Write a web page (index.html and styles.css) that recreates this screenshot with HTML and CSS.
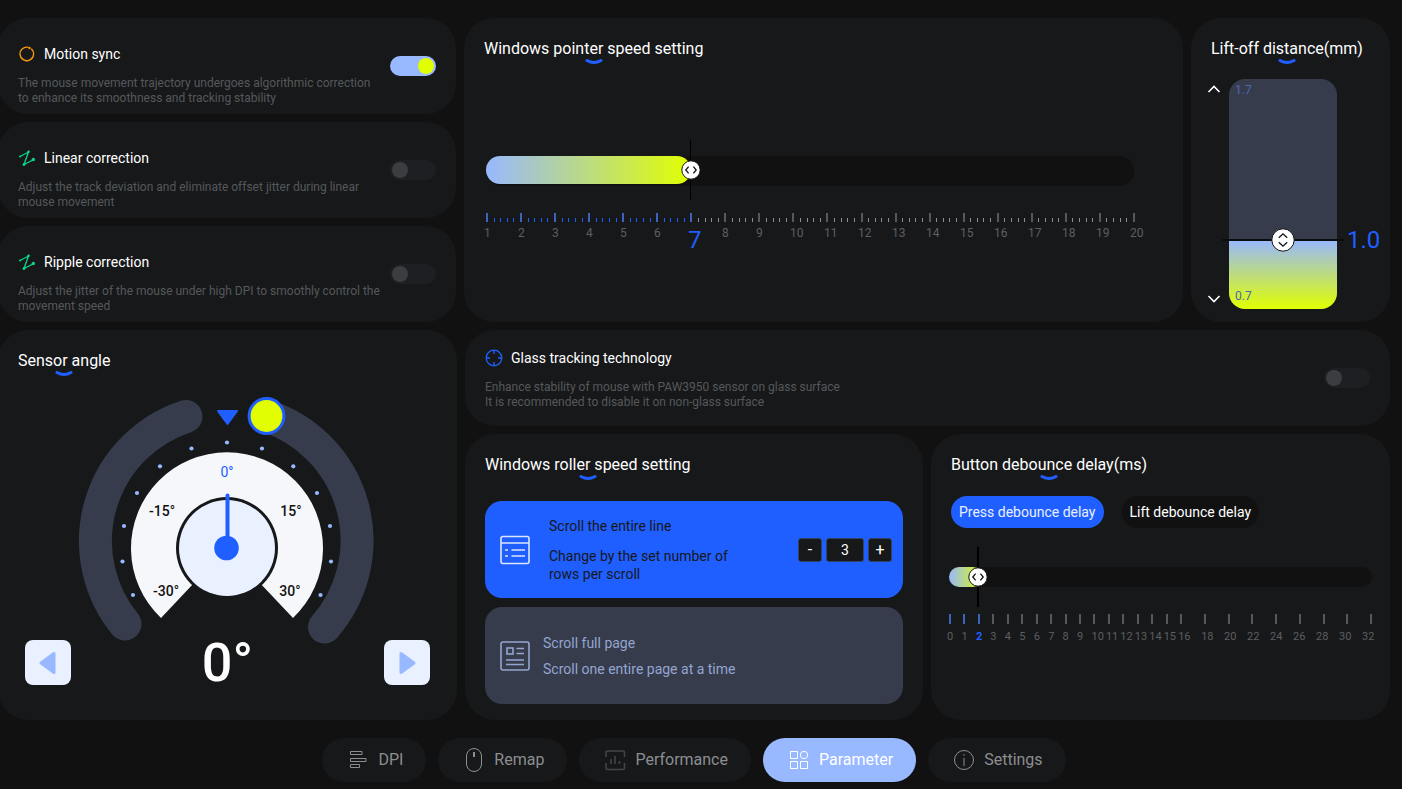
FILE: index.html
```html
<!DOCTYPE html>
<html lang="en">
<head>
  <meta charset="UTF-8">
  <meta name="viewport" content="width=device-width, initial-scale=1.0">
  <title>Parameter</title>
  <link rel="stylesheet" href="styles.css">
</head>
<body>
  <div class="page">
    <main class="panels">
      <div class="row row-top">
        <div class="stack">
          <section class="card switch-card">
            <div class="switch-text">
              <h3 class="switch-title">
                <svg class="switch-icon orange" viewBox="0 0 18 18"><path d="M10.500 2.300A6.800 6.800 0 1 0 13.200 3.700"/><circle cx="11.500" cy="3" r="1.200"/></svg>
                <label for="motionSync">Motion sync</label>
              </h3>
              <p class="switch-desc">The mouse movement trajectory undergoes algorithmic correction<br>to enhance its smoothness and tracking stability</p>
            </div>
            <input type="checkbox" class="toggle" id="motionSync" checked>
          </section>
          <section class="card switch-card">
            <div class="switch-text">
              <h3 class="switch-title">
                <svg class="switch-icon green" viewBox="0 0 18 18"><path d="M2 7.5L10.5 3L6 15.5L15 11"/><circle cx="10.5" cy="2.8" r="1.200"/><circle cx="6" cy="15.5" r="1.400"/><circle cx="15.3" cy="10.5" r="1.700"/><circle cx="2" cy="7.5" r="1"/></svg>
                <label for="linearCorrection">Linear correction</label>
              </h3>
              <p class="switch-desc">Adjust the track deviation and eliminate offset jitter during linear<br>mouse movement</p>
            </div>
            <input type="checkbox" class="toggle" id="linearCorrection">
          </section>
          <section class="card switch-card">
            <div class="switch-text">
              <h3 class="switch-title">
                <svg class="switch-icon green" viewBox="0 0 18 18"><path d="M2 7.5L10.5 3L6 15.5L15 11"/><circle cx="10.5" cy="2.8" r="1.200"/><circle cx="6" cy="15.5" r="1.400"/><circle cx="15.3" cy="10.5" r="1.700"/><circle cx="2" cy="7.5" r="1"/></svg>
                <label for="rippleCorrection">Ripple correction</label>
              </h3>
              <p class="switch-desc">Adjust the jitter of the mouse under high DPI to smoothly control the<br>movement speed</p>
            </div>
            <input type="checkbox" class="toggle" id="rippleCorrection">
          </section>
        </div>

        <section class="card pointer-card">
          <h2 class="card-title">Windows pointer speed setting
            <svg class="smile" viewBox="0 0 18 6"><path d="M2 1.5Q9 5.5 16 1.5"/></svg>
          </h2>
          <div class="slider pointer-slider">
            <div class="slider-track"><div class="slider-fill" style="width: 31.6%"></div></div>
            <div class="slider-handle" style="left: 31.6%">
              <svg viewBox="0 0 20 20"><circle cx="10" cy="10" r="9.2"/><path d="M7.6 6.6L4.8 10L7.6 13.4M12.4 6.6L15.2 10L12.4 13.4"/></svg>
            </div>
            <input type="range" class="slider-input" min="1" max="20" value="7" aria-label="Windows pointer speed setting">
          </div>
          <div class="ruler" id="pointerRuler"></div>
          <div class="scale pointer-scale" id="pointerScale"></div>
        </section>

        <section class="card lift-card">
          <h2 class="card-title">Lift-off distance(mm)
            <svg class="smile" viewBox="0 0 18 6"><path d="M2 1.5Q9 5.5 16 1.5"/></svg>
          </h2>
          <div class="lift">
            <div class="lift-arrows">
              <button class="arrow-button" aria-label="Increase"><svg viewBox="0 0 14 8"><path d="M1.5 7L7 1.5L12.5 7"/></svg></button>
              <button class="arrow-button" aria-label="Decrease"><svg viewBox="0 0 14 8"><path d="M1.5 1L7 6.5L12.5 1"/></svg></button>
            </div>
            <div class="lift-bar">
              <span class="lift-limit">1.7</span>
              <div class="lift-fill" style="height: 30%"></div>
              <div class="lift-line" style="bottom: 30%">
                <svg viewBox="0 0 24 24"><circle cx="12" cy="12" r="11.2"/><path d="M7.8 9.8L12 5.8L16.2 9.8M7.8 14.2L12 18.2L16.2 14.2"/></svg>
              </div>
              <span class="lift-limit">0.7</span>
              <input type="range" class="slider-input" min="0.7" max="1.7" step="0.1" value="1.0" aria-label="Lift-off distance">
            </div>
            <output class="lift-value">1.0</output>
          </div>
        </section>
      </div>

      <div class="row row-bottom">
        <section class="card sensor-card">
          <h2 class="card-title">Sensor angle
            <svg class="smile" viewBox="0 0 18 6"><path d="M2 1.5Q9 5.5 16 1.5"/></svg>
          </h2>
          <svg class="dial" viewBox="77 395 302 245">
            <path class="dial-ring" d="M186 416.500A131 131 0 0 0 125 624M266.500 416A131 131 0 0 1 324.500 627"/>
            <path class="dial-face" d="M227 548L161 618A96 96 0 1 1 293 618Z"/>
            <circle class="dial-gap" cx="227" cy="548" r="51"/>
            <circle class="dial-disc" cx="227" cy="548" r="48"/>
            <path class="dial-needle" d="M227.500 495.500V548"/>
            <circle class="dial-hub" cx="226.500" cy="548" r="12.300"/>
            <path class="dial-pointer" d="M218 411H237L227.500 424Z"/>
            <g class="dial-dots">
              <circle cx="227" cy="442.500" r="2.100"/>
              <circle cx="191.500" cy="448.500" r="2.100"/><circle cx="262" cy="448.500" r="2.100"/>
              <circle cx="160" cy="466.300" r="2.100"/><circle cx="293.300" cy="466.300" r="2.100"/>
              <circle cx="137" cy="493" r="2.100"/><circle cx="317" cy="493" r="2.100"/>
              <circle cx="124" cy="526" r="2.100"/><circle cx="330" cy="526" r="2.100"/>
              <circle cx="122.500" cy="561.500" r="2.100"/><circle cx="331" cy="561.500" r="2.100"/>
              <circle cx="133" cy="595" r="2.100"/><circle cx="320.500" cy="595" r="2.100"/>
            </g>
            <circle class="dial-knob" cx="266.500" cy="416" r="17.400"/>
            <g class="dial-labels">
              <text class="current" x="227" y="477">0°</text>
              <text x="162" y="516">-15°</text>
              <text x="291" y="516">15°</text>
              <text x="166" y="596">-30°</text>
              <text x="290" y="596">30°</text>
            </g>
          </svg>
          <div class="angle-row">
            <button class="angle-button" aria-label="Decrease angle"><svg viewBox="0 0 20 24"><path d="M16 2.500V21.500L3 12Z"/></svg></button>
            <output class="angle-value">0°</output>
            <button class="angle-button" aria-label="Increase angle"><svg viewBox="0 0 20 24"><path d="M4 2.500V21.500L17 12Z"/></svg></button>
          </div>
        </section>

        <div class="stack">
          <section class="card switch-card glass-card">
            <div class="switch-text">
              <h3 class="switch-title">
                <svg class="switch-icon blue" viewBox="0 0 18 18"><circle class="outline" cx="9" cy="9" r="7.800"/><path d="M9 1V5M9 13V17M1 9H5M13 9H17"/></svg>
                <label for="glassTracking">Glass tracking technology</label>
              </h3>
              <p class="switch-desc">Enhance stability of mouse with PAW3950 sensor on glass surface<br>It is recommended to disable it on non-glass surface</p>
            </div>
            <input type="checkbox" class="toggle" id="glassTracking">
          </section>

          <div class="pair">
            <section class="card roller-card">
              <h2 class="card-title">Windows roller speed setting
                <svg class="smile" viewBox="0 0 18 6"><path d="M2 1.5Q9 5.5 16 1.5"/></svg>
              </h2>
              <div class="roller-options">
                <div class="roller-option selected">
                  <input type="radio" name="roller" id="rollerLine" class="roller-radio" checked>
                  <label class="roller-label" for="rollerLine">
                    <svg class="roller-icon" viewBox="0 0 30 30"><rect x="1" y="1.500" width="28" height="27" rx="2"/><path d="M1 8H29M5 15H8M11.500 15H25M5 21H8M11.500 21H25"/></svg>
                    <span class="roller-text"><span>Scroll the entire line</span><span>Change by the set number of rows per scroll</span></span>
                  </label>
                  <div class="stepper">
                    <button class="stepper-button" aria-label="Fewer rows">-</button>
                    <input type="text" class="stepper-value" value="3" aria-label="Rows per scroll">
                    <button class="stepper-button" aria-label="More rows">+</button>
                  </div>
                </div>
                <div class="roller-option">
                  <input type="radio" name="roller" id="rollerPage" class="roller-radio">
                  <label class="roller-label" for="rollerPage">
                    <svg class="roller-icon" viewBox="0 0 30 30"><rect x="1" y="1" width="28" height="28" rx="2"/><rect x="7" y="7" width="6" height="6"/><path d="M16.500 7.500H24M16.500 12.500H24M6 19H24M6 23.500H24"/></svg>
                    <span class="roller-text"><span>Scroll full page</span><span>Scroll one entire page at a time</span></span>
                  </label>
                </div>
              </div>
            </section>

            <section class="card debounce-card">
              <h2 class="card-title">Button debounce delay(ms)
                <svg class="smile" viewBox="0 0 18 6"><path d="M2 1.5Q9 5.5 16 1.5"/></svg>
              </h2>
              <div class="tabs">
                <button class="tab active">Press debounce delay</button>
                <button class="tab">Lift debounce delay</button>
              </div>
              <div class="slider debounce-slider">
                <div class="slider-track"><div class="slider-fill" style="width: 8%"></div></div>
                <div class="slider-handle" style="left: 6.9%">
                  <svg viewBox="0 0 20 20"><circle cx="10" cy="10" r="9.2"/><path d="M7.6 6.6L4.8 10L7.6 13.4M12.4 6.6L15.2 10L12.4 13.4"/></svg>
                </div>
                <input type="range" class="slider-input" min="0" max="32" value="2" aria-label="Button debounce delay">
              </div>
              <div class="debounce-ruler" id="debounceRuler"></div>
              <div class="scale debounce-scale" id="debounceScale"></div>
            </section>
          </div>
        </div>
      </div>
    </main>

    <nav class="nav">
      <a class="nav-item" href="#dpi">
        <svg class="nav-icon" viewBox="0 0 24 24"><path d="M4.500 3.500H16V6.500H4.500ZM4.500 10.500H20V13.500H4.500ZM4.500 16.500H13.500V19.500H4.500Z"/></svg>
        <span class="nav-label">DPI</span></a>
      <a class="nav-item" href="#remap">
        <svg class="nav-icon" viewBox="0 0 24 24"><rect x="4.500" y="0.500" width="15" height="23" rx="7.500"/><rect x="11.500" y="4.500" width="1" height="4"/></svg>
        <span class="nav-label">Remap</span></a>
      <a class="nav-item" href="#performance">
        <svg class="nav-icon dim" viewBox="0 0 24 24"><path d="M3 9V4.500Q3 3 4.500 3H20Q21.500 3 21.500 4.500V9M3 15V20Q3 21.500 4.500 21.500H20Q21.500 21.500 21.500 20V15M8 16V11M12 16V8M16.500 16V13"/></svg>
        <span class="nav-label">Performance</span></a>
      <a class="nav-item active" href="#parameter">
        <svg class="nav-icon" viewBox="0 0 24 24"><path d="M3.500 3.500H10.500V10.500H3.500ZM3.500 13.500H10.500V20.500H3.500ZM13.500 13.500H20.500V20.500H13.500Z"/><circle cx="17" cy="7" r="3.700"/></svg>
        <span class="nav-label">Parameter</span></a>
      <a class="nav-item" href="#settings">
        <svg class="nav-icon" viewBox="0 0 24 24"><circle cx="12" cy="12" r="9.500"/><path d="M12 10V18M12 6V7.500"/></svg>
        <span class="nav-label">Settings</span></a>
    </nav>
  </div>
  <script src="script.js"></script>
</body>
</html>
```

FILE: styles.css
```css
* {
  box-sizing: border-box;
}

body {
  margin: 0;
  background-color: #111111;
  color: #ffffff;
  font-family: Roboto, "Liberation Sans", sans-serif;
  font-size: 14px;
  overflow-x: hidden;
}

h2, h3, p {
  margin: 0;
  font-weight: 400;
}

button, input {
  margin: 0;
  font-family: inherit;
}

button {
  padding: 0;
  border: none;
  cursor: pointer;
}

svg {
  display: block;
  fill: none;
}

/* the left cards run slightly past the window edge */
.page {
  padding: 18px 12px 0 0;
  margin-left: -2px;
}

.panels {
  display: flex;
  flex-direction: column;
  gap: 8px;
}

.row {
  display: grid;
  gap: 8px;
}

.row-top {
  grid-template-columns: minmax(0, 458fr) minmax(0, 719fr) minmax(0, 199fr);
}

.row-bottom {
  grid-template-columns: minmax(0, 459fr) minmax(0, 925fr);
}

.stack {
  display: flex;
  flex-direction: column;
  gap: 8px;
}

.card {
  background-color: #17181a;
  border-radius: 30px;
}

.card-title {
  display: flex;
  flex-direction: column;
  align-items: center;
  width: max-content;
  padding-top: 21px;
  margin-left: 20px;
  font-size: 16px;
  line-height: 20px;
}

.smile {
  width: 18px;
  height: 6px;
  stroke: #205fff;
  stroke-width: 3;
  stroke-linecap: round;
}

/* Switch cards */
.switch-card {
  display: flex;
  align-items: center;
  justify-content: space-between;
  padding: 0 20px;
}

.switch-text {
  padding: 26px 0 8px;
}

.glass-card .switch-text {
  padding: 18px 0 16px;
}

.switch-title {
  display: flex;
  align-items: center;
  gap: 8px;
  margin-bottom: 12px;
  font-size: 14px;
  line-height: 20px;
}

.switch-icon {
  width: 18px;
  height: 18px;
}

.switch-icon circle {
  fill: currentColor;
}

.switch-icon path, .switch-icon .outline {
  stroke: currentColor;
  stroke-width: 1.3;
  fill: none;
}

.orange {
  color: #f59a0c;
}

.green {
  color: #08d68c;
}

.blue {
  color: #205fff;
}

.switch-desc {
  font-size: 12px;
  line-height: 15px;
  color: #55585a;
  white-space: nowrap;
}

.toggle {
  appearance: none;
  flex: none;
  width: 46px;
  height: 20px;
  padding: 2px;
  border-radius: 10px;
  background-color: #1e1f23;
  cursor: pointer;
}

.toggle::before {
  content: "";
  display: block;
  width: 16px;
  height: 16px;
  border-radius: 50%;
  background-color: #3c3d40;
}

.toggle:checked {
  background-color: #98b8ff;
}

.toggle:checked::before {
  margin-left: auto;
  background-color: #e1ff00;
}

/* Sliders */
.slider {
  position: relative;
  height: 60px;
  padding-top: 16px;
}

.slider-track {
  height: 30px;
  border-radius: 15px;
  background-color: #111111;
}

.slider-fill {
  height: 28px;
  border-radius: 14px;
  background: linear-gradient(90deg, #98b8ff, #e1ff00);
}

.slider-handle {
  position: absolute;
  top: 0;
  width: 20px;
  height: 60px;
  margin-left: -10px;
  padding-top: 20px;
  background: linear-gradient(#000000, #000000) center / 1px 100% no-repeat;
}

.slider-handle svg {
  width: 20px;
  height: 20px;
}

.slider-handle circle, .lift-line circle {
  fill: #ffffff;
  stroke: #111111;
}

.slider-handle path, .lift-line path {
  stroke: #111111;
  stroke-width: 1.3;
}

.slider-input {
  position: absolute;
  top: 0;
  left: 0;
  width: 100%;
  height: 100%;
  opacity: 0;
  cursor: pointer;
}

.scale {
  display: grid;
  font-size: 12px;
  line-height: 16px;
  color: #5c5f61;
}

.scale span {
  width: 0;
}

.pointer-slider {
  margin: 75px 49px 0 22px;
}

.ruler {
  display: flex;
  justify-content: space-between;
  align-items: flex-end;
  height: 9px;
  margin: 13px 48px 0 22px;
}

.ruler i {
  width: 1px;
  height: 4px;
  background-color: #8c8e90;
}

.ruler .major {
  width: 2px;
  height: 9px;
  background-color: #55585c;
}

.ruler .passed {
  background-color: #205fff;
}

.ruler .major.passed {
  background-color: #3f62bd;
}

.pointer-scale {
  grid-template-columns: repeat(20, minmax(0, 1fr));
  height: 30px;
  margin: 3px 19px 0 20px;
}

.pointer-scale .current {
  font-size: 24px;
  line-height: 30px;
  color: #205fff;
}

/* Lift-off distance */
.lift {
  display: flex;
  padding: 14px 0 13px 16px;
}

.lift-arrows {
  display: flex;
  flex-direction: column;
  justify-content: space-between;
  padding: 6px 0;
}

.arrow-button {
  background: none;
}

.arrow-button svg {
  width: 14px;
  height: 8px;
  stroke: #ffffff;
  stroke-width: 1.6;
}

.lift-bar {
  position: relative;
  display: flex;
  flex: none;
  flex-direction: column;
  justify-content: space-between;
  width: 108px;
  height: 230px;
  padding: 3px 6px 5px;
  margin-left: 8px;
  border-radius: 16px;
  background-color: #363c4c;
}

.lift-limit {
  position: relative;
  font-size: 12px;
  line-height: 16px;
  color: #4a69b5;
}

.lift-fill {
  position: absolute;
  left: 0;
  right: 0;
  bottom: 0;
  border-radius: 0 0 16px 16px;
  background: linear-gradient(#98b8ff, #e1ff00);
}

.lift-line {
  position: absolute;
  left: -7px;
  right: -7px;
  display: flex;
  align-items: center;
  justify-content: center;
  height: 2px;
  margin-bottom: -1px;
  background-color: #0b0c0e;
}

.lift-line svg {
  flex: none;
  width: 24px;
  height: 24px;
}

.lift-value {
  align-self: flex-end;
  margin: 0 0 54px 10px;
  font-size: 24px;
  line-height: 30px;
  color: #205fff;
}

/* Sensor angle */
.dial {
  width: 302px;
  height: 245px;
  margin: 18px auto 0;
  overflow: visible;
}

.dial-ring {
  stroke: #363c4c;
  stroke-width: 33;
  stroke-linecap: round;
}

.dial-face {
  fill: #f5f7fa;
}

.dial-gap {
  fill: #17181a;
}

.dial-disc {
  fill: #e9f0ff;
}

.dial-needle {
  stroke: #205fff;
  stroke-width: 4;
  stroke-linecap: round;
}

.dial-hub {
  fill: #205fff;
}

.dial-pointer {
  fill: #205fff;
  stroke: #205fff;
  stroke-width: 2;
  stroke-linejoin: round;
}

.dial-dots {
  fill: #98b8ff;
}

.dial-knob {
  fill: #e1ff00;
  stroke: #205fff;
  stroke-width: 3;
}

.dial-labels {
  fill: #111111;
  font-size: 14px;
  font-weight: 500;
  text-anchor: middle;
}

.dial-labels .current {
  fill: #205fff;
  font-weight: 400;
}

.angle-row {
  display: flex;
  align-items: center;
  justify-content: space-between;
  padding: 0 27px;
}

.angle-button {
  display: flex;
  align-items: center;
  justify-content: center;
  width: 46px;
  height: 45px;
  border-radius: 8px;
  background-color: #e9f0ff;
}

.angle-button svg {
  width: 20px;
  height: 24px;
  fill: #98b8ff;
  stroke: #98b8ff;
  stroke-width: 3;
  stroke-linejoin: round;
}

.angle-value {
  font-size: 54px;
  font-weight: 500;
  line-height: 45px;
}

/* Roller speed */
.pair {
  display: grid;
  grid-template-columns: minmax(0, 458fr) minmax(0, 459fr);
  gap: 8px;
}

.roller-card {
  padding-bottom: 16px;
}

.roller-options {
  display: flex;
  flex-direction: column;
  gap: 9px;
  margin: 20px 20px 0;
}

.roller-option {
  display: flex;
  align-items: center;
  justify-content: space-between;
  height: 97px;
  padding: 0 11px 0 15px;
  border-radius: 17px;
  background-color: #363c4c;
  color: #94a5d0;
}

.roller-option.selected {
  background-color: #205fff;
  color: #17181a;
}

.roller-radio {
  position: absolute;
  opacity: 0;
}

.roller-label {
  display: flex;
  align-items: center;
  gap: 13px;
  cursor: pointer;
}

.selected .roller-label {
  gap: 19px;
}

.roller-icon {
  flex: none;
  width: 30px;
  height: 30px;
  stroke: #94a5d0;
  stroke-width: 1.6;
}

.selected .roller-icon {
  stroke: #dbe5ff;
}

.roller-text {
  display: flex;
  flex-direction: column;
  gap: 8px;
  max-width: 200px;
  line-height: 18px;
}

.selected .roller-text {
  gap: 12px;
}

.stepper {
  display: flex;
  gap: 4px;
}

.stepper-button, .stepper-value {
  width: 24px;
  height: 24px;
  padding: 0;
  border: 1px solid #34435e;
  border-radius: 3px;
  background-color: #17181a;
  color: #ffffff;
  font-size: 16px;
  line-height: 20px;
  text-align: center;
}

.stepper-value {
  width: 38px;
  font-size: 14px;
}

/* Debounce */
.tabs {
  display: flex;
  gap: 18px;
  margin: 15px 20px 0;
}

.tab {
  height: 32px;
  padding: 0 8px;
  border-radius: 16px;
  background-color: #111111;
  color: #ffffff;
  font-size: 14px;
}

.tab.active {
  background-color: #205fff;
  color: #e9f0ff;
}

.debounce-slider {
  padding-top: 20px;
  margin: 19px 18px 0;
}

.debounce-slider .slider-track, .debounce-slider .slider-fill {
  height: 20px;
  border-radius: 10px;
}

.debounce-slider .slider-handle {
  background-size: 2px 100%;
}

.debounce-ruler {
  display: grid;
  grid-template-columns: repeat(16, 14fr) repeat(8, 23fr) 2px;
  margin: 7px 18px 0;
}

.debounce-ruler i {
  width: 2px;
  height: 10px;
  background-color: #55585c;
}

.debounce-ruler .passed {
  background-color: #3f62bd;
}

.debounce-scale {
  grid-template-columns: repeat(16, 22fr) repeat(9, 35fr);
  margin: 5px 5px 0 16px;
  font-size: 11px;
}

.debounce-scale .current {
  color: #205fff;
  font-weight: 700;
}

/* Bottom navigation */
.nav {
  display: flex;
  justify-content: center;
  gap: 12px;
  margin-top: 18px;
}

.nav-item {
  display: flex;
  align-items: center;
  gap: 8px;
  height: 44px;
  padding: 0 23px 0 24px;
  border-radius: 22px;
  background-color: #17181a;
  color: #8c8e90;
  font-size: 16px;
  text-decoration: none;
}

.nav-item.active {
  background-color: #98b8ff;
  color: #ffffff;
}

.nav-label {
  padding-bottom: 2px;
}

.nav-icon {
  width: 24px;
  height: 24px;
  stroke: currentColor;
}

.nav-icon.dim {
  stroke: #434547;
  stroke-width: 1.6;
}
```

FILE: script.js
```js
function addMark(parent, tag, className, text) {
  const mark = document.createElement(tag);
  mark.className = className;
  mark.textContent = text;
  parent.appendChild(mark);
}

// Pointer speed: 1 to 20, five ticks per step
const pointerSpeed = 7;
const pointerRuler = document.getElementById('pointerRuler');
const pointerScale = document.getElementById('pointerScale');
for (let i = 0; i <= 95; i++) {
  const major = i % 5 === 0 ? 'major' : '';
  const passed = i <= (pointerSpeed - 1) * 5 ? ' passed' : '';
  addMark(pointerRuler, 'i', major + passed, '');
}
for (let n = 1; n <= 20; n++) {
  addMark(pointerScale, 'span', n === pointerSpeed ? 'current' : '', n);
}

// Debounce delay: every ms up to 16, then every second one
const debounceDelay = 2;
const debounceRuler = document.getElementById('debounceRuler');
const debounceScale = document.getElementById('debounceScale');
for (let n = 0; n <= 32; n += n < 16 ? 1 : 2) {
  addMark(debounceRuler, 'i', n <= debounceDelay ? 'passed' : '', '');
  addMark(debounceScale, 'span', n === debounceDelay ? 'current' : '', n);
}
```
